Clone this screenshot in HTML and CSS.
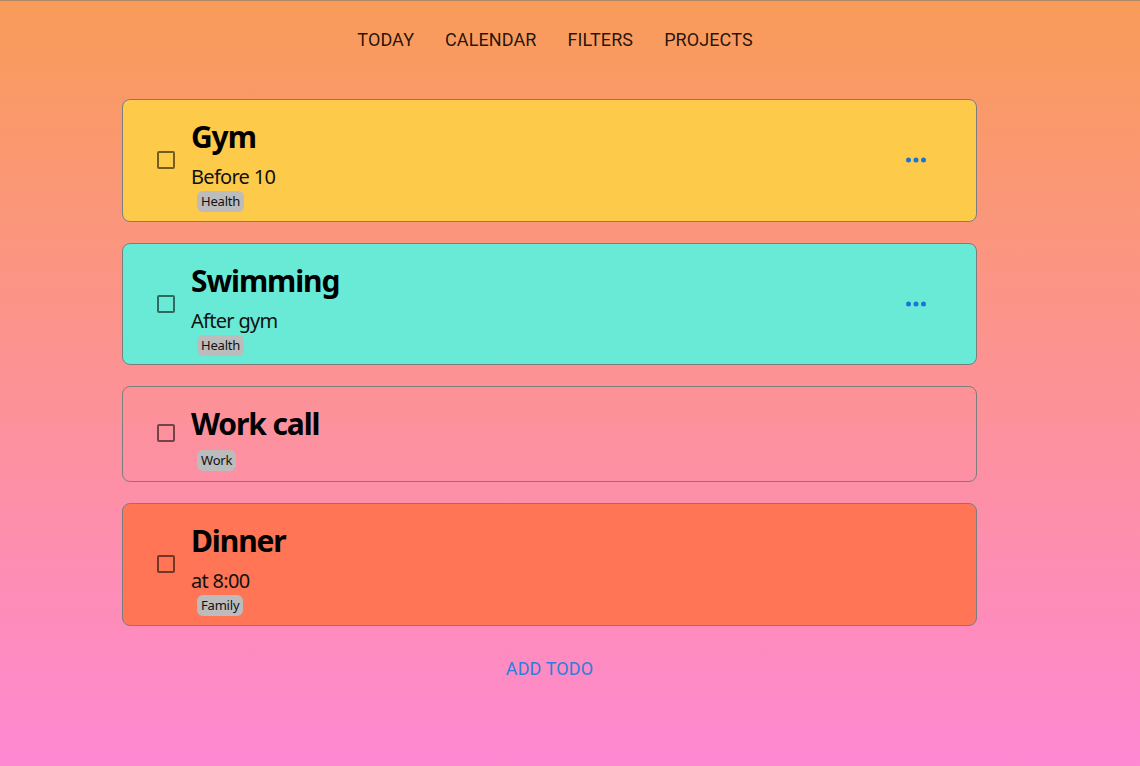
FILE: index.html
```html
<!DOCTYPE html>
<html lang="en">
<head>
<meta charset="utf-8">
<title>Todos</title>
<link rel="stylesheet" href="styles.css">
</head>
<body>
<div class="page">
  <nav class="nav">
    <a class="nav-link">TODAY</a>
    <a class="nav-link">CALENDAR</a>
    <a class="nav-link">FILTERS</a>
    <a class="nav-link">PROJECTS</a>
  </nav>
  <main class="list">
    <div class="card card-yellow">
      <span class="check"></span>
      <div class="content">
        <h2 class="title">Gym</h2>
        <p class="sub">Before 10</p>
        <span class="tag">Health</span>
      </div>
      <button class="more" aria-label="more">
        <svg width="30" height="30" viewBox="0 0 30 30"><circle cx="7.5" cy="15" r="2.5"/><circle cx="15" cy="15" r="2.5"/><circle cx="22.5" cy="15" r="2.5"/></svg>
      </button>
    </div>
    <div class="card card-teal">
      <span class="check"></span>
      <div class="content">
        <h2 class="title">Swimming</h2>
        <p class="sub">After gym</p>
        <span class="tag">Health</span>
      </div>
      <button class="more" aria-label="more">
        <svg width="30" height="30" viewBox="0 0 30 30"><circle cx="7.5" cy="15" r="2.5"/><circle cx="15" cy="15" r="2.5"/><circle cx="22.5" cy="15" r="2.5"/></svg>
      </button>
    </div>
    <div class="card card-clear">
      <span class="check"></span>
      <div class="content">
        <h2 class="title">Work call</h2>
        <span class="tag">Work</span>
      </div>
    </div>
    <div class="card card-coral">
      <span class="check"></span>
      <div class="content">
        <h2 class="title">Dinner</h2>
        <p class="sub">at 8:00</p>
        <span class="tag">Family</span>
      </div>
    </div>
  </main>
  <div class="add-row"><a class="add">ADD TODO</a></div>
</div>
</body>
</html>
```
FILE: styles.css
```css
html, body {
  margin: 0;
  padding: 0;
}
body {
  min-height: 100vh;
  box-sizing: border-box;
  border-top: 1px solid rgba(120, 120, 120, 0.55);
  background: linear-gradient(180deg, #f99c58 0%, #ff88d2 100%);
  font-family: "Noto Sans", "Open Sans", sans-serif;
}
.page {
  width: 1099px;
}
.nav {
  display: flex;
  justify-content: center;
  gap: 31px;
  padding: 27px 0 0 11px;
  height: 24px;
}
.nav-link {
  font-family: Roboto, sans-serif;
  font-size: 18px;
  line-height: 24px;
  color: rgba(0, 0, 0, 0.87);
  letter-spacing: 0.1px;
}
.list {
  width: 855px;
  margin: 47px auto 0;
  display: flex;
  flex-direction: column;
  gap: 21px;
}
.card {
  box-sizing: border-box;
  display: flex;
  align-items: center;
  border: 1px solid #7d7d7d;
  border-radius: 8px;
  padding: 17px 45px 8.5px 34px;
}
.card-yellow { background: #fdca49; }
.card-teal { background: #69ead6; }
.card-clear { background: transparent; padding-bottom: 10px; }
.card-coral { background: #ff7555; }
.check {
  flex: none;
  box-sizing: border-box;
  width: 18px;
  height: 18px;
  border: 2px solid rgba(0, 0, 0, 0.54);
  border-radius: 2px;
  margin-top: -9px;
}
.content {
  flex: 1;
  margin-left: 16px;
  display: flex;
  flex-direction: column;
  align-items: flex-start;
}
.title {
  margin: 0 0 6px;
  font-size: 30px;
  line-height: 40px;
  font-weight: 700;
  color: #000;
  letter-spacing: -1.1px;
}
.sub {
  margin: 0;
  font-size: 20px;
  line-height: 28px;
  color: #111;
  letter-spacing: -0.7px;
}
.tag {
  margin-left: 6px;
  height: 21px;
  line-height: 21px;
  padding: 0 4px;
  border-radius: 6px;
  background: #bcbcbc;
  font-size: 13px;
  color: #111;
  letter-spacing: -0.2px;
}
.more {
  flex: none;
  border: 0;
  background: none;
  padding: 0;
  width: 30px;
  height: 30px;
  margin-top: -9px;
  fill: #1976d2;
  cursor: pointer;
}
.more svg { display: block; }
.add-row {
  display: flex;
  justify-content: center;
  margin-top: 31px;
}
.add {
  font-family: Roboto, sans-serif;
  font-size: 18px;
  line-height: 24px;
  color: #2a7fdc;
  letter-spacing: 0.1px;
}
```
